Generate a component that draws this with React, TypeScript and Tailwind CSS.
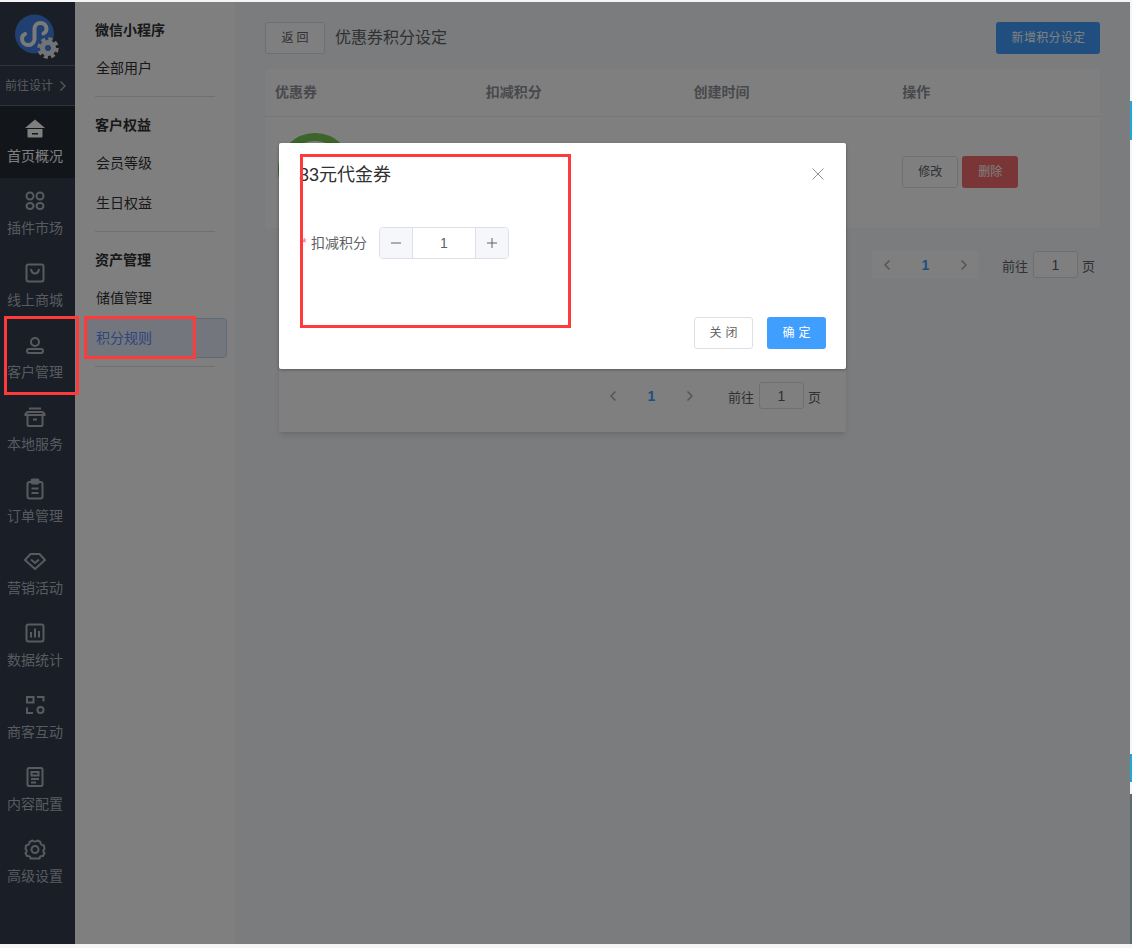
import React from "react";

const Home = () => (
  <svg width="22" height="22" viewBox="0 0 22 22" fill="currentColor">
    <path d="M11 1.500 21 10H1Z" />
    <path d="M3.500 11h15v7.500a1 1 0 0 1-1 1h-13a1 1 0 0 1-1-1ZM8 15v1.600h6V15Z" fillRule="evenodd" />
  </svg>
);

const Plugins = () => (
  <svg width="22" height="22" viewBox="0 0 22 22" fill="none" stroke="currentColor" strokeWidth="2">
    <rect x="2.500" y="2.500" width="7" height="7" rx="3.500" />
    <rect x="12.500" y="2.500" width="7" height="7" rx="3.500" />
    <ellipse cx="6" cy="16" rx="3.500" ry="3" />
    <ellipse cx="16" cy="16" rx="3.500" ry="3" />
  </svg>
);

const Bag = () => (
  <svg width="22" height="22" viewBox="0 0 22 22" fill="none" stroke="currentColor" strokeWidth="2">
    <rect x="2.500" y="2.500" width="17" height="17" rx="2" />
    <path d="M7 7c.5 3 2 4.500 4 4.500S14.500 10 15 7" />
  </svg>
);

const User = () => (
  <svg width="22" height="22" viewBox="0 0 22 22" fill="none" stroke="currentColor" strokeWidth="2">
    <circle cx="11" cy="8" r="4" />
    <rect x="3" y="15" width="16" height="4" rx="2" />
  </svg>
);

const Box = () => (
  <svg width="22" height="22" viewBox="0 0 22 22" fill="none" stroke="currentColor" strokeWidth="2">
    <path d="M5 2.500h12" />
    <path d="M1.500 8 3.500 6h15l2 2v1h-19Z" />
    <path d="M3.500 9v10a1 1 0 0 0 1 1h13a1 1 0 0 0 1-1V9" />
    <path d="M9 13.500h4" />
  </svg>
);

const Clipboard = () => (
  <svg width="22" height="22" viewBox="0 0 22 22" fill="none" stroke="currentColor" strokeWidth="2">
    <rect x="3.500" y="4" width="15" height="16.500" rx="2" />
    <rect x="7.500" y="1.500" width="7" height="4" rx="1" fill="currentColor" />
    <path d="M7.500 10.500h7M7.500 15h7" />
  </svg>
);

const Gem = () => (
  <svg width="22" height="22" viewBox="0 0 22 22" fill="none" stroke="currentColor" strokeWidth="2">
    <path d="M6.500 4h9L21 10l-10 9L1 10Z" strokeLinejoin="round" />
    <path d="m7 9.500 4 3.500 4-3.500" />
  </svg>
);

const Chart = () => (
  <svg width="22" height="22" viewBox="0 0 22 22" fill="none" stroke="currentColor" strokeWidth="2">
    <rect x="2.500" y="2.500" width="17" height="17" rx="2" />
    <path d="M7 10v5.500M11 6.500v9M15 9v6.500" />
  </svg>
);

const Scan = () => (
  <svg width="22" height="22" viewBox="0 0 22 22" fill="none" stroke="currentColor" strokeWidth="2">
    <rect x="3" y="3" width="6.500" height="5.500" />
    <path d="M13 3h6.500v4.500" />
    <path d="M3 13.500V19h6" />
    <circle cx="16.500" cy="16" r="3" />
  </svg>
);

const Doc = () => (
  <svg width="22" height="22" viewBox="0 0 22 22" fill="none" stroke="currentColor" strokeWidth="2">
    <rect x="3.500" y="2" width="15" height="18" rx="1.500" />
    <rect x="7.500" y="6" width="7" height="3.500" />
    <path d="M7 13h8M7 16.500h5" />
  </svg>
);

const Gear = () => (
  <svg width="22" height="22" viewBox="0 0 22 22" fill="none" stroke="currentColor" strokeWidth="2" strokeLinejoin="round">
    <path d="M8.500 2.500c1 1.300 4 1.300 5 0l3 1.500c-.3 1.700 1 3.300 3.500 3.500l.5 3.500c-1.600.8-1.600 3.200 0 4l-1.500 3c-1.800-.3-3.700.5-3.500 2.500h-9c.2-2-1.700-2.800-3.500-2.500L1.500 15c1.600-.8 1.600-3.200 0-4L2 7.500C4.500 7.300 5.800 5.700 5.500 4Z" />
    <circle cx="11" cy="11.500" r="3.500" />
  </svg>
);

const Logo = () => (
  <svg width="52" height="52" viewBox="0 0 52 52" fill="none">
    <circle cx="21.500" cy="21" r="19.500" fill="#3f80e0" />
    <path
      d="M12 21c-2 1-3 2.500-3 4.500 0 4 3 6.500 6.500 6.500s6-3 6-6V16c0-3.500 2.500-6 6-6s6 2.500 6 6c0 2-1 3.500-3 4.500"
      stroke="#f4f4f4"
      strokeWidth="4"
      strokeLinecap="round"
    />
    <circle cx="35" cy="35" r="8" fill="#e4e6ea" />
    <circle cx="35" cy="35" r="9" fill="none" stroke="#e4e6ea" strokeWidth="3.500" strokeDasharray="4 3.070" />
    <circle cx="35" cy="35" r="3" fill="#3f80e0" />
  </svg>
);

const menu = [
  { label: "首页概况", icon: <Home />, active: true },
  { label: "插件市场", icon: <Plugins /> },
  { label: "线上商城", icon: <Bag /> },
  { label: "客户管理", icon: <User /> },
  { label: "本地服务", icon: <Box /> },
  { label: "订单管理", icon: <Clipboard /> },
  { label: "营销活动", icon: <Gem /> },
  { label: "数据统计", icon: <Chart /> },
  { label: "商客互动", icon: <Scan /> },
  { label: "内容配置", icon: <Doc /> },
  { label: "高级设置", icon: <Gear /> },
];

const groups = [
  { title: "微信小程序", items: ["全部用户"] },
  { title: "客户权益", items: ["会员等级", "生日权益"] },
  { title: "资产管理", items: ["储值管理", "积分规则"] },
];

function Pagination() {
  return (
    <div className="flex items-start text-[13px] text-[#606266]">
      <div className="flex h-7 w-[106px] items-center justify-between bg-white px-[9px] pl-[10px]">
        <svg width="10" height="12" viewBox="0 0 10 12" fill="none" stroke="#a8abb2" strokeWidth="1.500">
          <path d="M7.500 1.500 3 6l4.500 4.500" />
        </svg>
        <span className="text-sm font-bold text-[#409eff]">1</span>
        <svg width="10" height="12" viewBox="0 0 10 12" fill="none" stroke="#a8abb2" strokeWidth="1.500">
          <path d="M2.500 1.500 7 6l-4.500 4.500" />
        </svg>
      </div>
      <span className="ml-6 pt-[6px]">前往</span>
      <div className="ml-[5px] mr-[4px] flex h-[27px] w-[45px] items-center justify-center rounded-[3px] border border-[#dcdfe6] bg-white text-sm">
        1
      </div>
      <span className="pt-[6px]">页</span>
    </div>
  );
}

export default function App() {
  return (
    <div className="relative h-[948px] w-[1132px] overflow-hidden bg-[#f5f5f5] pt-[2px] font-['Liberation_Sans','Noto_Sans_CJK_SC',sans-serif]">
      <div className="flex h-[942px] w-[1130px]">
        {/* Left menu */}
        <div className="w-[75px] shrink-0 bg-[#323c4e] text-[#b0b5bf]">
          <div className="flex h-16 items-start justify-center border-b border-[#5c6474] pl-[3px] pt-[11px]">
            <Logo />
          </div>
          <div className="flex h-10 items-center gap-[6px] border-b border-[#5c6474] pl-[5px] text-xs">
            前往设计
            <svg width="8" height="12" viewBox="0 0 8 12" fill="none" stroke="currentColor" strokeWidth="1.200">
              <path d="M1.500 1.500 6 6l-4.500 4.500" />
            </svg>
          </div>
          {menu.map((m) => (
            <div
              key={m.label}
              className={
                m.active
                  ? "flex h-[72px] flex-col items-center bg-[#242a34] pr-[5px] pt-3 text-white"
                  : "flex h-[72px] flex-col items-center pr-[5px] pt-3"
              }
            >
              {m.icon}
              <span className="mt-[6px] text-sm leading-5">{m.label}</span>
            </div>
          ))}
        </div>

        {/* Sub menu */}
        <div className="w-40 shrink-0 bg-white pt-2 text-sm text-[#303133]">
          {groups.map((g) => (
            <div key={g.title}>
              <div className="mx-[10px]">
                <div className="flex h-[38px] items-center px-[10px] text-sm font-semibold">
                  <span className="mt-[1px]">{g.title}</span>
                </div>
                {g.items.map((item) =>
                  item === "积分规则" ? (
                    <div
                      key={item}
                      className="mr-[-2px] flex h-10 items-center rounded-[4px] border border-[#c0d4ee] bg-[#e6edfb] px-[10px] text-[#6288f5]"
                    >
                      {item}
                    </div>
                  ) : (
                    <div key={item} className="flex h-10 items-center pl-[11px]">
                      {item}
                    </div>
                  )
                )}
              </div>
              <div className="mx-5 my-2 border-b border-[#dcdfe6]" />
            </div>
          ))}
        </div>

        {/* Main */}
        <div className="flex-1 bg-[#f6f8fa] pl-[30px] pr-[30px] pt-5">
          <div className="flex h-8 items-center justify-between">
            <div className="flex items-center gap-[10px]">
              <button className="h-8 w-[60px] rounded-[3px] border border-[#dcdfe6] bg-white pl-[3px] text-xs tracking-[3px] text-[#606266]">
                返回
              </button>
              <span className="text-base text-[#606266]">优惠券积分设定</span>
            </div>
            <button className="h-8 w-[104px] rounded-[3px] bg-[#409eff] pl-[1px] text-xs tracking-[0.3px] text-white">
              新增积分设定
            </button>
          </div>

          <div className="mt-[15px] overflow-hidden rounded-[4px] bg-white">
            <div className="grid h-12 grid-cols-4 items-center border-b border-[#ebeef5] pb-[2px] text-sm font-semibold text-[#909399]">
              <div className="pl-[10px]">优惠券</div>
              <div className="pl-[12px]">扣减积分</div>
              <div className="pl-[11px]">创建时间</div>
              <div className="pl-[11px]">操作</div>
            </div>
            <div className="grid h-[111px] grid-cols-4">
              <div className="pl-[13px] pt-4">
                <div className="h-[74px] w-[74px] rounded-full border-8 border-[#78c856]" />
              </div>
              <div />
              <div />
              <div className="flex gap-1 pl-[11px] pt-[39px]">
                <button className="h-8 w-14 rounded-[3px] border border-[#dcdfe6] text-xs text-[#606266]">修改</button>
                <button className="h-8 w-14 rounded-[3px] bg-[#f56c6c] text-xs text-white">删除</button>
              </div>
            </div>
          </div>

          <div className="mt-[23px] flex justify-end pr-[5px]">
            <Pagination />
          </div>
        </div>
      </div>

      {/* Dialog underneath */}
      <div className="absolute left-[279px] top-[143px] flex h-[289px] w-[567px] flex-col justify-end rounded-[2px] bg-white pb-[22px] pr-[25px] shadow-md">
        <div className="flex justify-end">
          <Pagination />
        </div>
      </div>

      {/* Mask */}
      <div className="absolute left-0 top-[2px] h-[942px] w-[1130px] bg-black/50" />

      {/* Dialog */}
      <div className="absolute left-[279px] top-[143px] h-[226px] w-[567px] rounded-[2px] bg-white px-5 shadow-[0_1px_3px_rgba(0,0,0,0.3)]">
        <div className="flex h-16 items-start justify-between pt-5">
          <span className="text-lg leading-6 text-[#303133]">33元代金券</span>
          <svg className="mr-[2px] mt-[5px]" width="12" height="12" viewBox="0 0 12 12" stroke="#909399" strokeWidth="1">
            <path d="m.5.5 11 11M11.500.5l-11 11" />
          </svg>
        </div>
        <div className="mt-5 flex h-8 items-center text-[#606266]">
          <span className="w-3 pl-[3px] text-xs text-[#f56c6c]">*</span>
          <span className="text-sm">扣减积分</span>
          <div className="ml-3 flex h-8 w-[130px] overflow-hidden rounded-[4px] border border-[#dcdfe6]">
            <div className="flex w-[33px] items-center justify-center border-r border-[#dcdfe6] bg-[#f5f7fa]">
              <svg width="12" height="12" viewBox="0 0 12 12" stroke="#606266">
                <path d="M1 6h10" />
              </svg>
            </div>
            <div className="flex flex-1 items-center justify-center text-sm">1</div>
            <div className="flex w-[33px] items-center justify-center border-l border-[#dcdfe6] bg-[#f5f7fa]">
              <svg width="12" height="12" viewBox="0 0 12 12" stroke="#606266">
                <path d="M1 6h10M6 1v10" />
              </svg>
            </div>
          </div>
        </div>
        <div className="mt-[58px] flex justify-end gap-[14px]">
          <button className="h-8 w-[59px] rounded-[3px] border border-[#dcdfe6] bg-white pl-1 text-xs tracking-[4px] text-[#606266]">
            关闭
          </button>
          <button className="h-8 w-[59px] rounded-[3px] bg-[#409eff] pl-1 text-xs tracking-[4px] text-white">确定</button>
        </div>
      </div>

      {/* Red marks drawn on the screenshot */}
      <div className="absolute left-[4px] top-[316px] h-[79px] w-[75px] border-[3px] border-[#ff3a3a]" />
      <div className="absolute left-[84px] top-[316px] h-[43px] w-[112px] border-[3px] border-[#ff3a3a]" />
      <div className="absolute left-[300px] top-[154px] h-[174px] w-[271px] border-[3px] border-[#ff3a3a]" />

      {/* Edge of the window behind */}
      <div className="absolute left-[1130px] top-[101px] h-[39px] w-[2px] bg-[#1ea7d8]" />
      <div className="absolute left-[1130px] top-[754px] h-[28px] w-[2px] bg-[#1ea7d8]" />
      <div className="absolute left-[1130px] top-[794px] h-[150px] w-[2px] bg-[#5b6a70]" />
    </div>
  );
}
